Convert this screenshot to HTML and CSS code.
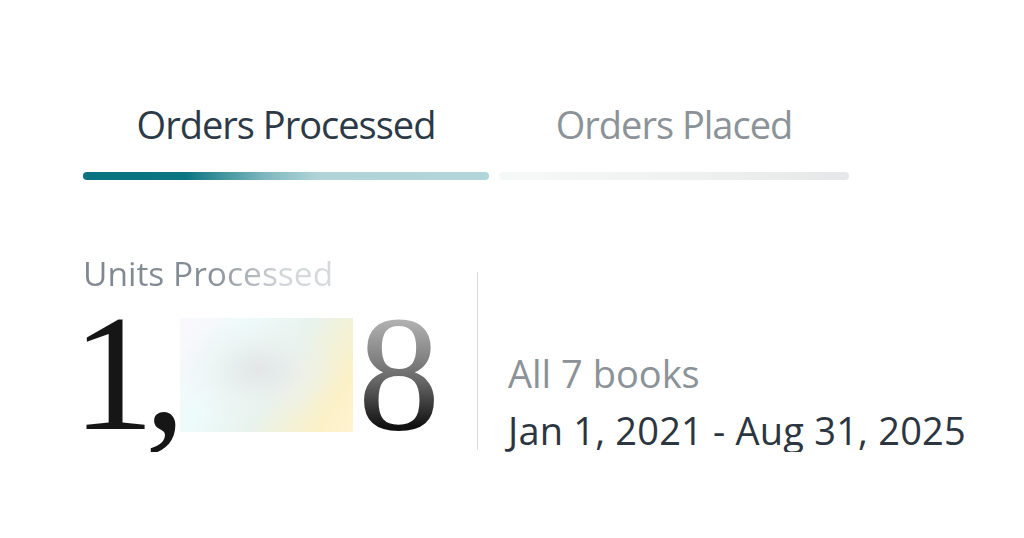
FILE: index.html
```html
<!DOCTYPE html>
<html>
<head>
<meta charset="utf-8">
<link rel="stylesheet" href="styles.css">
</head>
<body>
<div class="page">
  <div class="tabs">
    <div class="tab tab-active">
      <div class="tab-label">Orders Processed</div>
      <div class="tab-bar"></div>
    </div>
    <div class="tab tab-inactive">
      <div class="tab-label">Orders Placed</div>
      <div class="tab-bar"></div>
    </div>
  </div>
  <div class="stats">
    <div class="stat-main">
      <div class="stat-label">Units Processed</div>
      <div class="stat-number">
        <span class="num-dark">1,</span><span class="num-blur"></span><span class="num-fade">8</span>
      </div>
    </div>
    <div class="divider"></div>
    <div class="stat-meta">
      <div class="meta-scope">All 7 books</div>
      <div class="meta-range">Jan 1, 2021 - Aug 31, 2025</div>
    </div>
  </div>
</div>
</body>
</html>
```
FILE: styles.css
```css
html, body {
  margin: 0;
  padding: 0;
  background: #ffffff;
}
.page {
  padding: 102px 0 0 83px;
  font-family: "Open Sans", "Noto Sans", sans-serif;
}
.tabs {
  display: flex;
  gap: 10px;
}
.tab {
  display: flex;
  flex-direction: column;
  align-items: center;
}
.tab-active { width: 406px; }
.tab-inactive { width: 350px; }
.tab-label {
  font-size: 38px;
  line-height: 44px;
  letter-spacing: -1px;
  white-space: nowrap;
}
.tab-active .tab-label { color: #2c3a47; }
.tab-inactive .tab-label { color: #8b9398; }
.tab-bar {
  align-self: stretch;
  height: 8px;
  border-radius: 4px;
  margin-top: 26px;
}
.tab-active .tab-bar {
  background: linear-gradient(90deg, #077480 0%, #0a7581 25%, #7fb8bf 45%, #b0d4d8 58%, #b2d5d9 100%);
}
.tab-inactive .tab-bar {
  background: linear-gradient(90deg, #f7f8f8 0%, #eeefef 60%, #e6e7e8 100%);
}
.stats {
  display: flex;
  align-items: flex-start;
  margin-top: 75px;
}
.stat-main {
  width: 394px;
}
.stat-label {
  font-size: 33.5px;
  line-height: 36px;
  background: linear-gradient(90deg, #7f8891 0%, #858e96 50%, #d3d6d9 80%, #d8dbde 100%);
  -webkit-background-clip: text;
  background-clip: text;
  color: transparent;
  display: inline-block;
  white-space: nowrap;
}
.stat-number {
  display: flex;
  align-items: flex-start;
  font-family: "Liberation Serif", "DejaVu Serif", serif;
  font-size: 165px;
  line-height: 150px;
  margin-top: 8px;
}
.num-dark {
  color: #161616;
  letter-spacing: -10px;
  margin-left: -11px;
}
.num-blur {
  flex: none;
  width: 173px;
  height: 114px;
  margin: 19px 5px 0 4px;
  background:
    radial-gradient(ellipse at 45% 45%, rgba(225,228,230,0.9) 0%, rgba(235,240,238,0.5) 35%, rgba(255,255,255,0) 60%),
    linear-gradient(120deg, #fbf7fd 0%, #eefbfb 30%, #e8f3ee 55%, #fbf0c8 85%, #fff4cf 100%);
}
.num-fade {
  background: linear-gradient(180deg, #b0b0b0 15%, #666 55%, #111 85%);
  -webkit-background-clip: text;
  background-clip: text;
  color: transparent;
}
.divider {
  flex: none;
  width: 1px;
  height: 178px;
  background: #d9dbdd;
  margin-top: 17px;
}
.stat-meta {
  padding-left: 30px;
  padding-top: 96px;
  white-space: nowrap;
}
.meta-scope {
  font-size: 38px;
  line-height: 44px;
  color: #8b9398;
}
.meta-range {
  font-size: 38px;
  line-height: 44px;
  letter-spacing: 0.2px;
  color: #2c3640;
  margin-top: 13px;
}
```
